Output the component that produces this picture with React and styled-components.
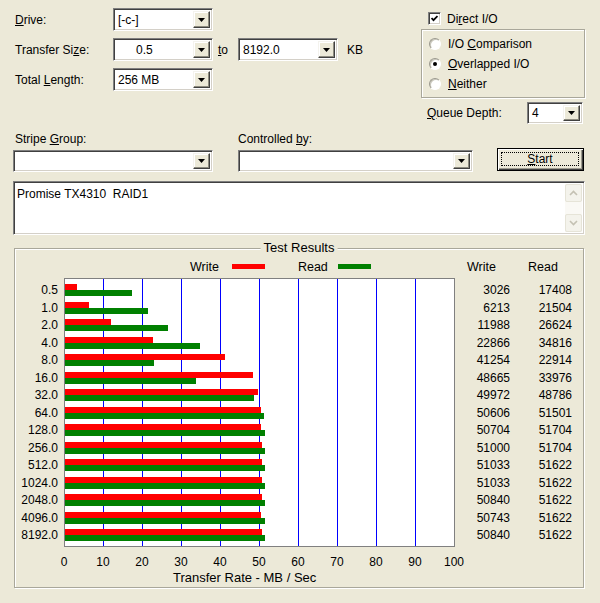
import React from 'react';
import styled, { createGlobalStyle } from 'styled-components';

const Global = createGlobalStyle`
  html, body { margin: 0; padding: 0; background: #ECE9D8; }
  body { font-family: "Liberation Sans", Arial, sans-serif; font-size: 12px; color: #000; }
  * { box-sizing: border-box; }
  u { text-decoration-thickness: 1px; text-underline-offset: 1px; }
`;

const Window = styled.div`
  width: 600px;
  height: 603px;
  padding: 8px 15px 0 13px;
  background: #ECE9D8;
  overflow: hidden;
  display: flex;
  flex-direction: column;
`;

const Top = styled.div`
  display: flex;
`;

const FormCol = styled.div`
  width: 408px;
  display: flex;
  flex-direction: column;
  gap: 7px;
`;

const FormRow = styled.div`
  display: flex;
  align-items: center;
  height: 23px;
`;

const Label = styled.span`
  width: ${p => p.$w || 100}px;
  padding-left: ${p => (p.$pl === undefined ? 2 : p.$pl)}px;
  white-space: nowrap;
  flex: none;
`;

const Field = styled.div`
  width: ${p => p.$w}px;
  height: ${p => p.$h || 22}px;
  flex: none;
  background: #fff;
  border: 1px solid;
  border-color: #7F7F7F #FFFFFF #FFFFFF #7F7F7F;
  box-shadow: inset 1px 1px 0 #404040, inset -1px -1px 0 #D4D0C8;
  display: flex;
  align-items: center;
  padding: 2px;
`;

const FieldText = styled.span`
  flex: 1;
  padding-left: ${p => p.$indent || 2}px;
  white-space: pre;
`;

const DropBtn = styled.span`
  width: 17px;
  align-self: stretch;
  background: #ECE9D8;
  border: 1px solid;
  border-color: #F4F3EE #404040 #404040 #F4F3EE;
  box-shadow: inset -1px -1px 0 #8E8C80, inset 1px 1px 0 #FFFFFF;
  display: flex;
  align-items: center;
  justify-content: center;
`;

const Select = ({ w, h, value, indent }) => (
  <Field $w={w} $h={h}>
    <FieldText $indent={indent}>{value}</FieldText>
    <DropBtn>
      <svg width="7" height="4" viewBox="0 0 7 4">
        <polygon points="0,0 7,0 3.5,4" fill="#000" />
      </svg>
    </DropBtn>
  </Field>
);

const To = styled.span`
  width: 25px;
  padding-left: 5px;
`;

const Unit = styled.span`
  margin-left: 9px;
`;

const OptionsCol = styled.div`
  width: 164px;
  display: flex;
  flex-direction: column;
`;

const CheckRow = styled.div`
  height: 21px;
  display: flex;
  align-items: center;
  padding-left: 7px;
  gap: 6px;
`;

const CheckBox = styled.span`
  width: 13px;
  height: 13px;
  background: #fff;
  border: 1px solid;
  border-color: #808080 #fff #fff #808080;
  box-shadow: inset 1px 1px 0 #404040, inset -1px -1px 0 #D4D0C8;
  display: flex;
  align-items: center;
  justify-content: center;
`;

const RadioGroup = styled.div`
  height: 69px;
  border: 1px solid #A9A79A;
  box-shadow: inset 1px 1px 0 #fff, 1px 1px 0 #fff;
  padding: 4px 0 3px 7px;
  display: flex;
  flex-direction: column;
`;

const RadioRow = styled.div`
  height: 20px;
  display: flex;
  align-items: center;
  gap: 7px;
`;

const RadioDot = styled.span`
  width: 12px;
  height: 12px;
  border-radius: 50%;
  background: #fff;
  border: 1px solid;
  border-color: #9A988C #fff #fff #9A988C;
  box-shadow: inset 1px 1px 0 #C8C6BA;
  display: flex;
  align-items: center;
  justify-content: center;
  &::after {
    content: '';
    width: 4px;
    height: 4px;
    border-radius: 50%;
    background: ${p => (p.$on ? '#000' : 'transparent')};
  }
`;

const QueueRow = styled.div`
  margin-top: 4px;
  height: 22px;
  display: flex;
  align-items: center;
`;

const Second = styled.div`
  display: flex;
  align-items: flex-end;
  margin-top: 8px;
`;

const FieldCol = styled.div`
  display: flex;
  flex-direction: column;
  margin-left: ${p => p.$ml || 0}px;
  gap: 3px;
`;

const SmallLabel = styled.span`
  height: 15px;
  line-height: 15px;
  padding-left: ${p => (p.$pl === undefined ? 2 : p.$pl)}px;
`;

const StartButton = styled.div`
  margin-left: 24px;
  margin-bottom: 1px;
  width: 87px;
  height: 23px;
  border: 1px solid #000;
  background: #ECE9D8;
  box-shadow: inset 1px 1px 0 #fff, inset -1px -1px 0 #404040, inset -2px -2px 0 #9D9B8F;
  padding: 3px 4px 4px 3px;
  display: flex;
`;

const FocusRing = styled.span`
  flex: 1;
  border: 1px dotted #000;
  display: flex;
  align-items: center;
  justify-content: center;
`;

const TextBox = styled.div`
  margin-top: 9px;
  width: 572px;
  height: 54px;
  background: #fff;
  border: 1px solid;
  border-color: #7F7F7F #FFFFFF #FFFFFF #7F7F7F;
  box-shadow: inset 1px 1px 0 #404040, inset -1px -1px 0 #D4D0C8;
  padding: 2px;
  display: flex;
`;

const TextContent = styled.div`
  flex: 1;
  padding: 3px 1px;
  white-space: pre;
  line-height: 14px;
`;

const ScrollBar = styled.div`
  width: 17px;
  display: flex;
  flex-direction: column;
  background: #F7F6F1;
`;

const ScrollBtn = styled.div`
  height: 18px;
  background: #F4F3EC;
  border: 1px solid #E6E4D8;
  border-radius: 2px;
  display: flex;
  align-items: center;
  justify-content: center;
`;

const ScrollTrack = styled.div`
  flex: 1;
  background: #FAF9F5;
`;

const GroupBox = styled.div`
  position: relative;
  margin-top: 13px;
  margin-left: 1px;
  width: 570px;
  height: 340px;
  border: 1px solid #A9A79A;
  box-shadow: inset 1px 1px 0 #fff, 1px 1px 0 #fff;
`;

const GroupTitle = styled.span`
  position: absolute;
  top: -9px;
  left: 50%;
  transform: translateX(-50%);
  padding: 0 3px;
  background: #ECE9D8;
  font-size: 13px;
  line-height: 16px;
  white-space: nowrap;
`;

const ChartGrid = styled.div`
  display: grid;
  grid-template-columns: 49px 391px 55px 62px;
  grid-template-rows: 29px 269px auto auto;
`;

const HeadCell = styled.div`
  height: 29px;
  padding-top: 6px;
  padding-left: ${p => p.$pl || 0}px;
  display: flex;
  align-items: center;
  font-size: 12.5px;
`;

const LegendText = styled.span`
  margin-left: ${p => p.$ml}px;
`;

const LegendBar = styled.span`
  margin-left: ${p => p.$ml}px;
  width: 33px;
  height: 5px;
  background: ${p => p.$color};
`;

const ValueCol = styled.div`
  padding-top: 6px;
  padding-right: ${p => p.$pr || 0}px;
  display: flex;
  flex-direction: column;
  text-align: right;
`;

const ValueRow = styled.div`
  height: 12px;
  line-height: 12px;
  margin-bottom: 5.5px;
  white-space: nowrap;
`;

const AxisRow = styled.div`
  grid-column: 2;
  margin-top: 8px;
  margin-left: -19.5px;
  display: flex;
  height: 15px;
  line-height: 15px;
`;

const AxisLabel = styled.span`
  width: 39px;
  flex: none;
  text-align: center;
`;

const AxisTitle = styled.div`
  grid-column: 2 / span 2;
  padding-left: 109px;
  line-height: 15px;
  font-size: 13px;
  white-space: nowrap;
`;

const data = [
  ['0.5', 3026, 17408],
  ['1.0', 6213, 21504],
  ['2.0', 11988, 26624],
  ['4.0', 22866, 34816],
  ['8.0', 41254, 22914],
  ['16.0', 48665, 33976],
  ['32.0', 49972, 48786],
  ['64.0', 50606, 51501],
  ['128.0', 50704, 51704],
  ['256.0', 51000, 51704],
  ['512.0', 51033, 51622],
  ['1024.0', 51033, 51622],
  ['2048.0', 50840, 51622],
  ['4096.0', 50743, 51622],
  ['8192.0', 50840, 51622],
];

const SCALE = 3.87;

const Plot = () => (
  <svg width="391" height="269" viewBox="0 0 391 269" shapeRendering="crispEdges">
    <rect x="0.5" y="0.5" width="390" height="268" fill="#fff" stroke="#808080" />
    {Array.from({ length: 9 }, (_, k) => (
      <line key={k} x1={39 * (k + 1) + 0.5} y1="1" x2={39 * (k + 1) + 0.5} y2="268" stroke="#0000FF" />
    ))}
    {data.map(([, w, r], i) => {
      const y = Math.round(6 + 17.5 * i);
      return (
        <g key={i}>
          <rect x="1" y={y} width={(w / 1000) * SCALE} height="6" fill="#FF0000" />
          <rect x="1" y={y + 6} width={(r / 1000) * SCALE} height="6" fill="#008000" />
        </g>
      );
    })}
  </svg>
);

const Chevron = ({ up }) => (
  <svg width="9" height="6" viewBox="0 0 9 6">
    <polyline
      points={up ? '1,5 4.5,1.5 8,5' : '1,1 4.5,4.5 8,1'}
      fill="none"
      stroke="#C4C1B3"
      strokeWidth="1.6"
    />
  </svg>
);

export default function App() {
  return (
    <>
      <Global />
      <Window>
        <Top>
          <FormCol>
            <FormRow>
              <Label><u>D</u>rive:</Label>
              <Select w={100} h={23} value="[-c-]" />
            </FormRow>
            <FormRow>
              <Label>Transfer Si<u>z</u>e:</Label>
              <Select w={100} h={23} value="0.5" indent={20} />
              <To><u>t</u>o</To>
              <Select w={100} h={23} value="8192.0" />
              <Unit>KB</Unit>
            </FormRow>
            <FormRow>
              <Label>Total <u>L</u>ength:</Label>
              <Select w={100} h={23} value="256 MB" />
            </FormRow>
          </FormCol>
          <OptionsCol>
            <CheckRow>
              <CheckBox>
                <svg width="7" height="7" viewBox="0 0 7 7">
                  <polyline points="0.5,3 2.5,5.2 6.5,1" fill="none" stroke="#000" strokeWidth="1.8" />
                </svg>
              </CheckBox>
              <span>Di<u>r</u>ect I/O</span>
            </CheckRow>
            <RadioGroup>
              <RadioRow>
                <RadioDot />
                <span>I/O <u>C</u>omparison</span>
              </RadioRow>
              <RadioRow>
                <RadioDot $on />
                <span><u>O</u>verlapped I/O</span>
              </RadioRow>
              <RadioRow>
                <RadioDot />
                <span><u>N</u>either</span>
              </RadioRow>
            </RadioGroup>
            <QueueRow>
              <Label $w={106} $pl={6}><u>Q</u>ueue Depth:</Label>
              <Select w={56} value="4" />
            </QueueRow>
          </OptionsCol>
        </Top>

        <Second>
          <FieldCol>
            <SmallLabel>Stripe <u>G</u>roup:</SmallLabel>
            <Select w={200} value="" />
          </FieldCol>
          <FieldCol $ml={25}>
            <SmallLabel $pl={0}>Controlled <u>b</u>y:</SmallLabel>
            <Select w={235} value="" />
          </FieldCol>
          <StartButton>
            <FocusRing><span><u>S</u>tart</span></FocusRing>
          </StartButton>
        </Second>

        <TextBox>
          <TextContent>Promise TX4310  RAID1</TextContent>
          <ScrollBar>
            <ScrollBtn><Chevron up /></ScrollBtn>
            <ScrollTrack />
            <ScrollBtn><Chevron /></ScrollBtn>
          </ScrollBar>
        </TextBox>

        <GroupBox>
          <GroupTitle>Test Results</GroupTitle>
          <ChartGrid>
            <HeadCell />
            <HeadCell>
              <LegendText $ml={126}>Write</LegendText>
              <LegendBar $ml={13} $color="#FF0000" />
              <LegendText $ml={33}>Read</LegendText>
              <LegendBar $ml={10} $color="#008000" />
            </HeadCell>
            <HeadCell $pl={12}>Write</HeadCell>
            <HeadCell $pl={18}>Read</HeadCell>

            <ValueCol $pr={6}>
              {data.map(([s]) => <ValueRow key={s}>{s}</ValueRow>)}
            </ValueCol>
            <Plot />
            <ValueCol>
              {data.map(([s, w]) => <ValueRow key={s}>{w}</ValueRow>)}
            </ValueCol>
            <ValueCol>
              {data.map(([s, , r]) => <ValueRow key={s}>{r}</ValueRow>)}
            </ValueCol>

            <AxisRow>
              {[0, 10, 20, 30, 40, 50, 60, 70, 80, 90, 100].map(v => (
                <AxisLabel key={v}>{v}</AxisLabel>
              ))}
            </AxisRow>
            <AxisTitle>Transfer Rate - MB / Sec</AxisTitle>
          </ChartGrid>
        </GroupBox>
      </Window>
    </>
  );
}
